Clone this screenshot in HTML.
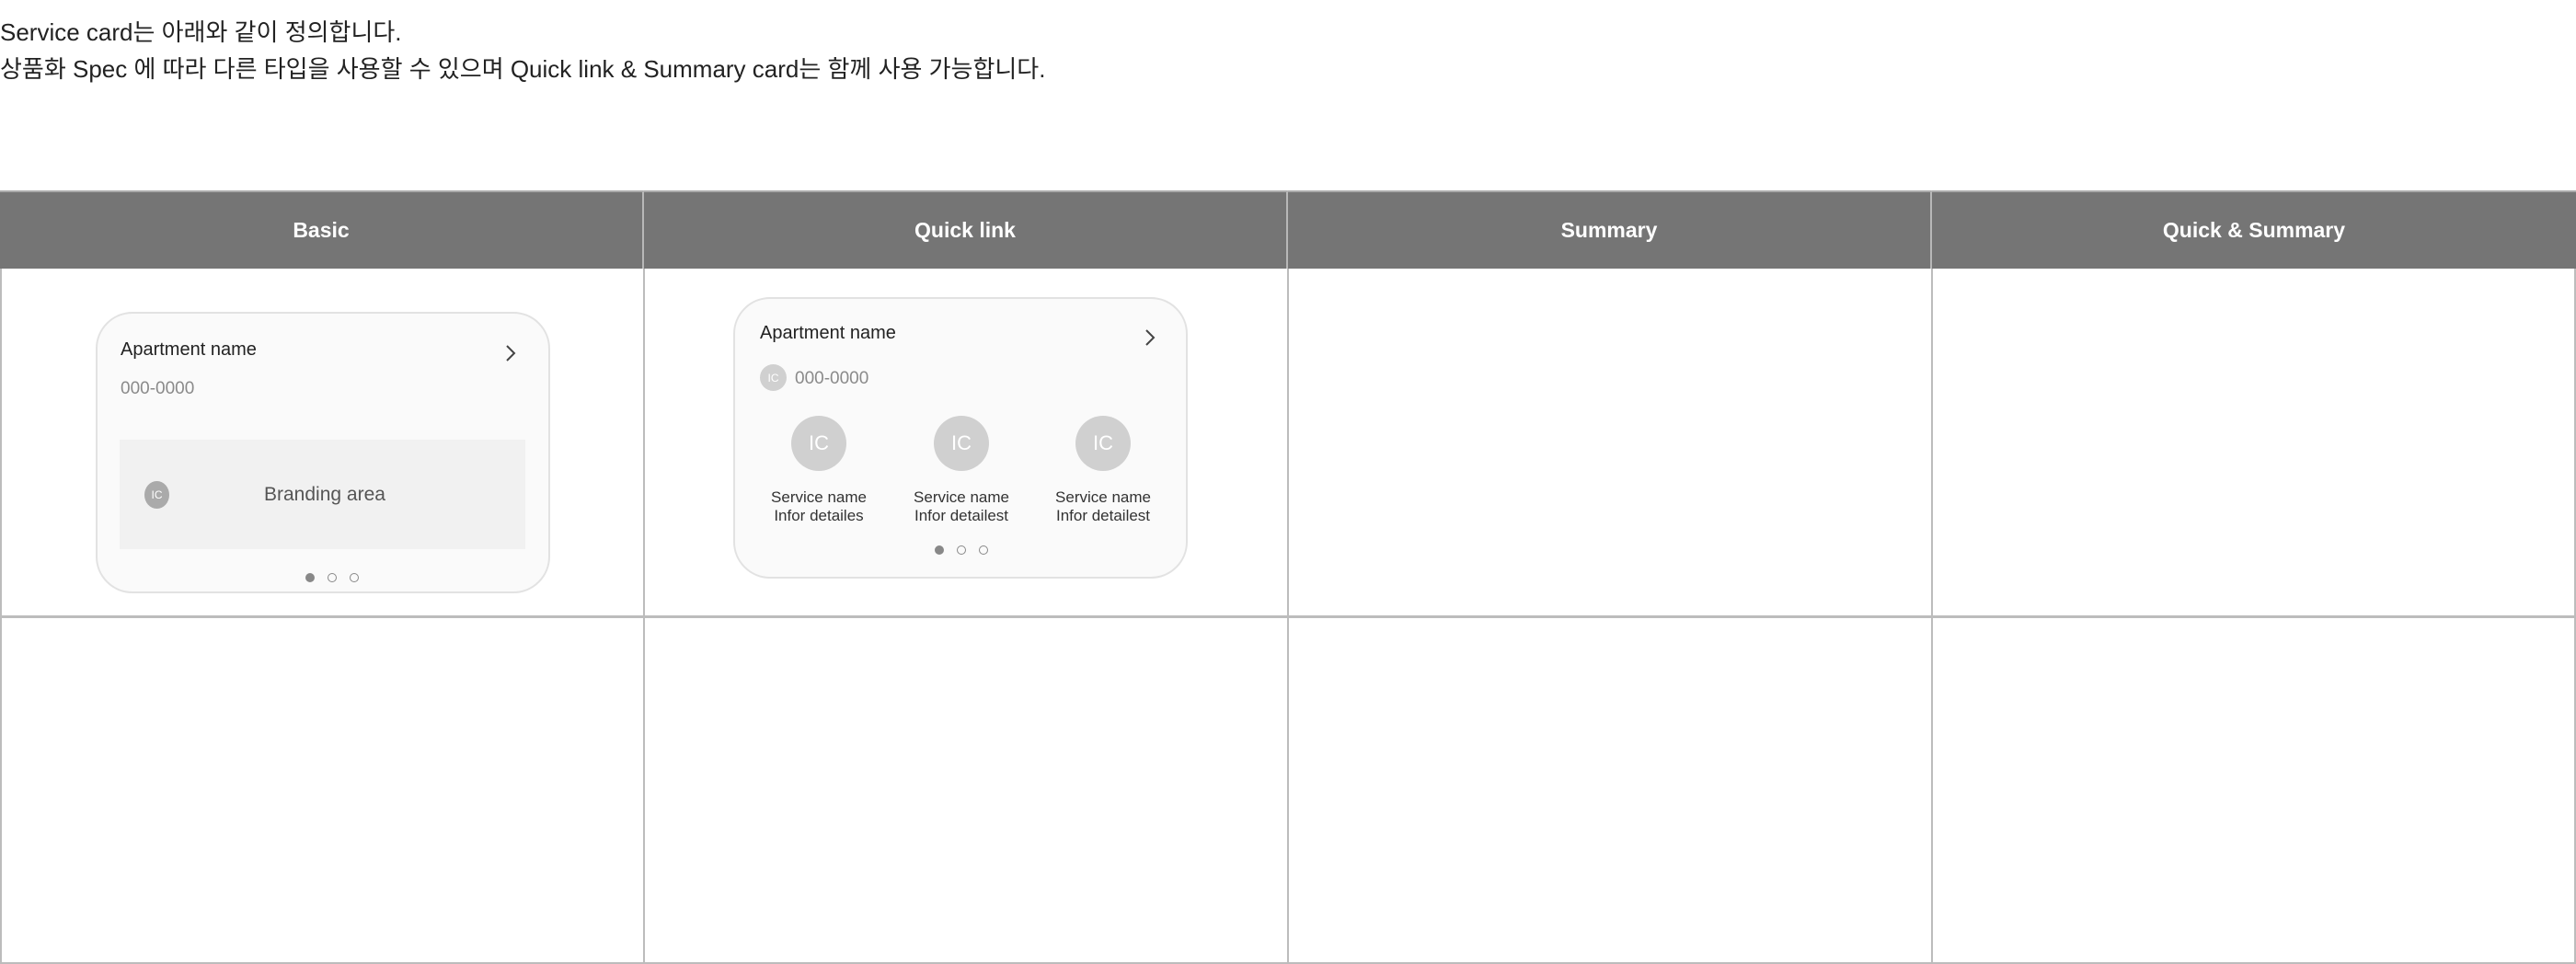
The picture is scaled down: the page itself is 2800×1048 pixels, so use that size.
<!DOCTYPE html>
<html><head><meta charset="utf-8"><style>
*{margin:0;padding:0;box-sizing:border-box}
body{width:2800px;height:1048px;background:#fff;position:relative;overflow:hidden;font-family:"Liberation Sans","Noto Sans CJK KR",sans-serif;color:#222}
.a{position:absolute;white-space:nowrap}
.intro{font-size:26px;color:#222;left:0}
.hdr{position:absolute;top:207px;height:85px;background:#757575;color:#fff;font-size:23px;font-weight:600;display:flex;align-items:center;justify-content:center;border-right:2px solid #b8b8b8;border-top:2px solid #aaa}
.vl{position:absolute;width:2px;background:#bcbcbc}
.hl{position:absolute;height:2px;background:#bcbcbc}
.card{position:absolute;background:#fafafa;border:2px solid #e2e2e2;border-radius:40px}
.t{font-size:20px;color:#222}
.g{font-size:19px;color:#8a8a8a}
.dot{position:absolute;width:10px;height:10px;border-radius:50%;border:1.5px solid #888}
.ic{position:absolute;border-radius:50%;color:#fff;display:flex;align-items:center;justify-content:center}
.sv{font-size:17px;color:#333;text-align:center;line-height:20px;width:140px}
</style></head><body>
<div class="a intro" style="top:15px">Service card는 아래와 같이 정의합니다.</div>
<div class="a intro" style="top:55px">상품화 Spec 에 따라 다른 타입을 사용할 수 있으며 Quick link &amp; Summary card는 함께 사용 가능합니다.</div>

<div class="hdr" style="left:0;width:700px">Basic</div>
<div class="hdr" style="left:700px;width:700px">Quick link</div>
<div class="hdr" style="left:1400px;width:700px">Summary</div>
<div class="hdr" style="left:2100px;width:700px;border-right:none">Quick &amp; Summary</div>

<div class="vl" style="left:0;top:292px;height:756px"></div>
<div class="vl" style="left:699px;top:292px;height:756px"></div>
<div class="vl" style="left:1399px;top:292px;height:756px"></div>
<div class="vl" style="left:2099px;top:292px;height:756px"></div>
<div class="vl" style="left:2798px;top:292px;height:756px"></div>
<div class="hl" style="left:0;top:669px;width:2800px;height:3px"></div>
<div class="hl" style="left:0;top:1046px;width:2800px"></div>

<!-- Basic card -->
<div class="card" style="left:104px;top:339px;width:494px;height:306px"></div>
<div class="a t" style="left:131px;top:369px">Apartment name</div>
<svg class="a" style="left:548px;top:374px" width="14" height="20"><path d="M3 2 L11 10 L3 18" fill="none" stroke="#444" stroke-width="2"/></svg>
<div class="a g" style="left:131px;top:412px">000-0000</div>
<div class="a" style="left:130px;top:478px;width:441px;height:119px;background:#f1f1f1"></div>
<div class="ic" style="left:157px;top:523px;width:27px;height:30px;background:#aaa;font-size:12px">IC</div>
<div class="a" style="left:287px;top:526px;font-size:21px;color:#555">Branding area</div>
<div class="dot" style="left:332px;top:623px;background:#888;border-color:#888"></div>
<div class="dot" style="left:356px;top:623px"></div>
<div class="dot" style="left:380px;top:623px"></div>

<!-- Quick link card -->
<div class="card" style="left:797px;top:323px;width:494px;height:306px"></div>
<div class="a t" style="left:826px;top:351px">Apartment name</div>
<svg class="a" style="left:1243px;top:357px" width="14" height="20"><path d="M3 2 L11 10 L3 18" fill="none" stroke="#444" stroke-width="2"/></svg>
<div class="ic" style="left:826px;top:396px;width:29px;height:29px;background:#d0d0d0;font-size:12px">IC</div>
<div class="a g" style="left:864px;top:401px">000-0000</div>
<div class="ic" style="left:860px;top:452px;width:60px;height:60px;background:#d0d0d0;font-size:22px">IC</div>
<div class="ic" style="left:1015px;top:452px;width:60px;height:60px;background:#d0d0d0;font-size:22px">IC</div>
<div class="ic" style="left:1169px;top:452px;width:60px;height:60px;background:#d0d0d0;font-size:22px">IC</div>
<div class="a sv" style="left:820px;top:531px">Service name<br>Infor detailes</div>
<div class="a sv" style="left:975px;top:531px">Service name<br>Infor detailest</div>
<div class="a sv" style="left:1129px;top:531px">Service name<br>Infor detailest</div>
<div class="dot" style="left:1016px;top:593px;background:#888;border-color:#888"></div>
<div class="dot" style="left:1040px;top:593px"></div>
<div class="dot" style="left:1064px;top:593px"></div>
</body></html>
